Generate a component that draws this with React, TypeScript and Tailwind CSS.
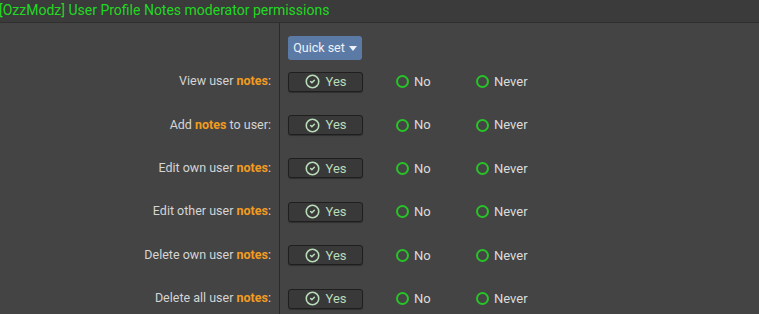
import React from 'react';
import { CircleCheck } from 'lucide-react';

const rows: { before: string; after: string }[] = [
  { before: 'View user ', after: ':' },
  { before: 'Add ', after: ' to user:' },
  { before: 'Edit own user ', after: ':' },
  { before: 'Edit other user ', after: ':' },
  { before: 'Delete own user ', after: ':' },
  { before: 'Delete all user ', after: ':' },
];

function Radio({ label }: { label: string }) {
  return (
    <div className="flex items-center gap-[5px] w-[80px]">
      <span className="w-[13px] h-[13px] rounded-full border-2 border-[#27c427] box-border" />
      <span className="text-[#dcdcdc]">{label}</span>
    </div>
  );
}

export default function App() {
  return (
    <div
      className="w-[759px] h-[314px] overflow-hidden bg-[#444444] text-[13px]"
      style={{ fontFamily: 'Roboto, "Noto Sans", sans-serif' }}
    >
      <div className="h-[23px] bg-[#3b3b3b] border-b border-[#2f2f2f] flex items-start pt-[3px] -ml-[1px]">
        <span className="text-[14px] text-[#22d822] leading-none">
          [OzzModz] User Profile Notes moderator permissions
        </span>
      </div>
      <div className="flex">
        <div className="w-[280px] border-r border-[#2a2a2a] shrink-0" />
        <div className="pl-[8px] pt-[13px]">
          <button className="h-[24px] w-[74px] rounded-[3px] bg-[#5b7ba6] text-[#eef2f8] flex items-center justify-center gap-[4px] text-[12.5px]">
            Quick set
            <svg width="8" height="5" viewBox="0 0 8 5">
              <path d="M0 0h8L4 5z" fill="#eef2f8" />
            </svg>
          </button>
        </div>
      </div>
      {rows.map((r, i) => (
        <div key={i} className="flex h-[43.4px]">
          <div className="w-[280px] shrink-0 border-r border-[#2a2a2a] flex items-center justify-end pr-[8px] text-[12.5px] text-[#d4d4d4]">
            <span>
              {r.before}
              <span className="font-bold text-[#f29c1f]">notes</span>
              {r.after}
            </span>
          </div>
          <div className="flex items-center pl-[8px]">
            <div className="w-[75px] h-[20px] rounded-[3px] bg-[#393939] border border-[#1f1f1f] flex items-center justify-center gap-[6px] text-[#b9dcb9] shadow-[0_1px_1px_rgba(0,0,0,0.3)]">
              <CircleCheck size={15} strokeWidth={2.5} color="#b9dcb9" />
              <span>Yes</span>
            </div>
            <div className="ml-[33px] flex">
              <Radio label="No" />
              <Radio label="Never" />
            </div>
          </div>
        </div>
      ))}
    </div>
  );
}
